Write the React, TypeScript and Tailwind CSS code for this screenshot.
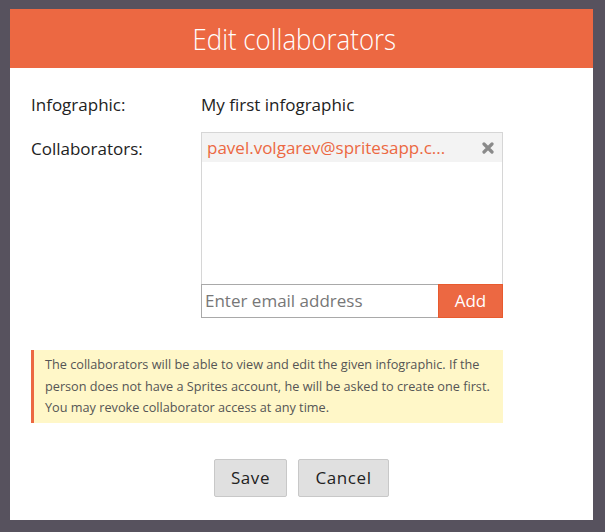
import React from 'react';

export default function App() {
  return (
    <div className="w-[605px] h-[532px] bg-[#57525e] pt-[9px] pl-[10px]" style={{ fontFamily: '"Open Sans", sans-serif' }}>
      <div className="w-[583px] h-[511px] bg-white flex flex-col">
        <div className="h-[59px] bg-[#ec6842] flex items-center justify-center pr-[14px]">
          <h1 className="text-white text-[30px] font-light scale-x-[0.86] whitespace-nowrap leading-none">
            Edit collaborators
          </h1>
        </div>

        <div className="pl-[21px] pr-[90px] pt-[26px]">
          <div className="flex text-[17px] text-[#222] leading-[22px]">
            <div className="w-[170px]">Infographic:</div>
            <div>My first infographic</div>
          </div>

          <div className="flex mt-[16px] text-[17px] text-[#222]">
            <div className="w-[170px] pt-[6px] leading-[22px]">Collaborators:</div>
            <div className="w-[302px]">
              <div className="h-[152px] border border-[#d6d6d6] border-b-0">
                <div className="h-[29px] bg-[#f3f3f3] flex items-center pl-[5px] pr-[8px]">
                  <span className="flex-1 text-[#ec6842] text-[17px] truncate">pavel.volgarev@spritesapp.c...</span>
                  <svg width="12" height="12" viewBox="0 0 12 12" className="ml-2">
                    <path d="M2 2 L10 10 M10 2 L2 10" stroke="#8a8a8a" strokeWidth="3.2" strokeLinecap="round" />
                  </svg>
                </div>
              </div>
              <div className="flex h-[34px]">
                <div className="flex-1 border border-[#a9a9a9] border-r-0 flex items-center pl-[3px] text-[#777] text-[17px]">
                  Enter email address
                </div>
                <button className="w-[65px] bg-[#ec6842] border border-[#e85a2e] text-white text-[17px]">Add</button>
              </div>
            </div>
          </div>

          <div className="mt-[32px] w-[472px] bg-[#fff7c8] border-l-[3px] border-[#ec6842] pl-[11px] pr-2 py-[4px] text-[12.7px] leading-[21.5px] text-[#555]">
            The collaborators will be able to view and edit the given infographic. If the person does not have a Sprites account, he will be asked to create one first. You may revoke collaborator access at any time.
          </div>
        </div>

        <div className="flex justify-center gap-[11px] mt-[36px]">
          <button className="w-[73px] h-[38px] bg-[#e0e0e0] border border-[#c8c8c8] rounded-[2px] text-[17px] tracking-[0.6px] text-[#222]">Save</button>
          <button className="w-[91px] h-[38px] bg-[#e0e0e0] border border-[#c8c8c8] rounded-[2px] text-[17px] tracking-[0.6px] text-[#222]">Cancel</button>
        </div>
      </div>
    </div>
  );
}
